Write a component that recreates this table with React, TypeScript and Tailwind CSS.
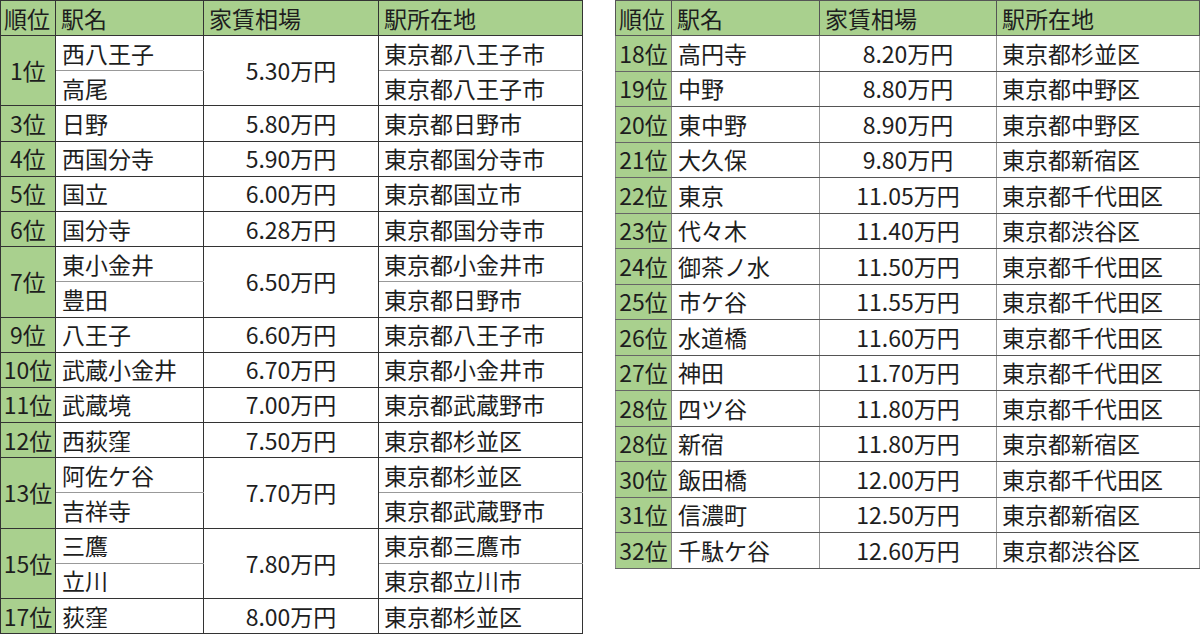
import type { ReactNode } from "react";

type Sub = { name: string; addr: string };
type Group = { rank: string; rent: string; subs: Sub[] };

const LEFT: Group[] = [
  { rank: "1位", rent: "5.30万円", subs: [{ name: "西八王子", addr: "東京都八王子市" }, { name: "高尾", addr: "東京都八王子市" }] },
  { rank: "3位", rent: "5.80万円", subs: [{ name: "日野", addr: "東京都日野市" }] },
  { rank: "4位", rent: "5.90万円", subs: [{ name: "西国分寺", addr: "東京都国分寺市" }] },
  { rank: "5位", rent: "6.00万円", subs: [{ name: "国立", addr: "東京都国立市" }] },
  { rank: "6位", rent: "6.28万円", subs: [{ name: "国分寺", addr: "東京都国分寺市" }] },
  { rank: "7位", rent: "6.50万円", subs: [{ name: "東小金井", addr: "東京都小金井市" }, { name: "豊田", addr: "東京都日野市" }] },
  { rank: "9位", rent: "6.60万円", subs: [{ name: "八王子", addr: "東京都八王子市" }] },
  { rank: "10位", rent: "6.70万円", subs: [{ name: "武蔵小金井", addr: "東京都小金井市" }] },
  { rank: "11位", rent: "7.00万円", subs: [{ name: "武蔵境", addr: "東京都武蔵野市" }] },
  { rank: "12位", rent: "7.50万円", subs: [{ name: "西荻窪", addr: "東京都杉並区" }] },
  { rank: "13位", rent: "7.70万円", subs: [{ name: "阿佐ケ谷", addr: "東京都杉並区" }, { name: "吉祥寺", addr: "東京都武蔵野市" }] },
  { rank: "15位", rent: "7.80万円", subs: [{ name: "三鷹", addr: "東京都三鷹市" }, { name: "立川", addr: "東京都立川市" }] },
  { rank: "17位", rent: "8.00万円", subs: [{ name: "荻窪", addr: "東京都杉並区" }] },
];

const RIGHT: [string, string, string, string][] = [
  ["18位", "高円寺", "8.20万円", "東京都杉並区"],
  ["19位", "中野", "8.80万円", "東京都中野区"],
  ["20位", "東中野", "8.90万円", "東京都中野区"],
  ["21位", "大久保", "9.80万円", "東京都新宿区"],
  ["22位", "東京", "11.05万円", "東京都千代田区"],
  ["23位", "代々木", "11.40万円", "東京都渋谷区"],
  ["24位", "御茶ノ水", "11.50万円", "東京都千代田区"],
  ["25位", "市ケ谷", "11.55万円", "東京都千代田区"],
  ["26位", "水道橋", "11.60万円", "東京都千代田区"],
  ["27位", "神田", "11.70万円", "東京都千代田区"],
  ["28位", "四ツ谷", "11.80万円", "東京都千代田区"],
  ["28位", "新宿", "11.80万円", "東京都新宿区"],
  ["30位", "飯田橋", "12.00万円", "東京都千代田区"],
  ["31位", "信濃町", "12.50万円", "東京都新宿区"],
  ["32位", "千駄ケ谷", "12.60万円", "東京都渋谷区"],
];

const HEADS = ["順位", "駅名", "家賃相場", "駅所在地"];

function Head({ edge }: { edge: string }) {
  return (
    <thead>
      <tr className="h-[35px] bg-[#a9d08e]">
        {HEADS.map((h, i) => (
          <th
            key={h}
            className={`border ${edge} text-left font-normal leading-none whitespace-nowrap ${
              i === 0 ? "pl-[3px]" : "pl-[5px]"
            }`}
          >
            {h}
          </th>
        ))}
      </tr>
    </thead>
  );
}

function Cell({ children, className = "", rowSpan }: { children: ReactNode; className?: string; rowSpan?: number }) {
  return (
    <td rowSpan={rowSpan} className={`whitespace-nowrap leading-none p-0 ${className}`}>
      {children}
    </td>
  );
}

export default function App() {
  return (
    <div
      className="flex h-[636px] w-[1200px] items-start gap-[32px] bg-white text-[23px] text-[#1e1e1e]"
      style={{ fontFamily: '"Noto Sans CJK JP", "Noto Sans", sans-serif' }}
    >
      <table className="w-[582px] shrink-0 table-fixed border-collapse">
        <colgroup>
          <col className="w-[55px]" />
          <col className="w-[148px]" />
          <col className="w-[175px]" />
          <col className="w-[204px]" />
        </colgroup>
        <Head edge="border-[#333]" />
        <tbody>
          {LEFT.flatMap((g) =>
            g.subs.map((s, j) => {
              const multi = g.subs.length > 1;
              const subBorder = multi
                ? j === 0
                  ? "border-t-[#333] border-b-[#999]"
                  : "border-t-[#999] border-b-[#333]"
                : "border-y-[#333]";
              return (
                <tr key={g.rank + s.name} className="h-[35.2px]">
                  {j === 0 && (
                    <Cell rowSpan={g.subs.length} className="border border-[#333] bg-[#a9d08e] text-center">
                      {g.rank}
                    </Cell>
                  )}
                  <Cell className={`border border-x-[#333] ${subBorder} pl-[6px]`}>{s.name}</Cell>
                  {j === 0 && (
                    <Cell rowSpan={g.subs.length} className="border border-[#333] text-center">
                      {g.rent}
                    </Cell>
                  )}
                  <Cell className={`border border-x-[#333] ${subBorder} pl-[5px]`}>{s.addr}</Cell>
                </tr>
              );
            })
          )}
        </tbody>
      </table>

      <table className="w-[584px] shrink-0 table-fixed border-collapse">
        <colgroup>
          <col className="w-[56px]" />
          <col className="w-[148px]" />
          <col className="w-[177px]" />
          <col className="w-[203px]" />
        </colgroup>
        <Head edge="border-[#555]" />
        <tbody>
          {RIGHT.map(([rank, name, rent, addr]) => (
            <tr key={rank + name} className="h-[35.5px]">
              <Cell className="border border-y-[#666] border-x-[#888] bg-[#a9d08e] text-center">{rank}</Cell>
              <Cell className="border border-y-[#555] border-x-[#999] pl-[6px]">{name}</Cell>
              <Cell className="border border-y-[#555] border-x-[#999] text-center">{rent}</Cell>
              <Cell className="border border-y-[#555] border-x-[#999] pl-[5px]">{addr}</Cell>
            </tr>
          ))}
        </tbody>
      </table>
    </div>
  );
}
